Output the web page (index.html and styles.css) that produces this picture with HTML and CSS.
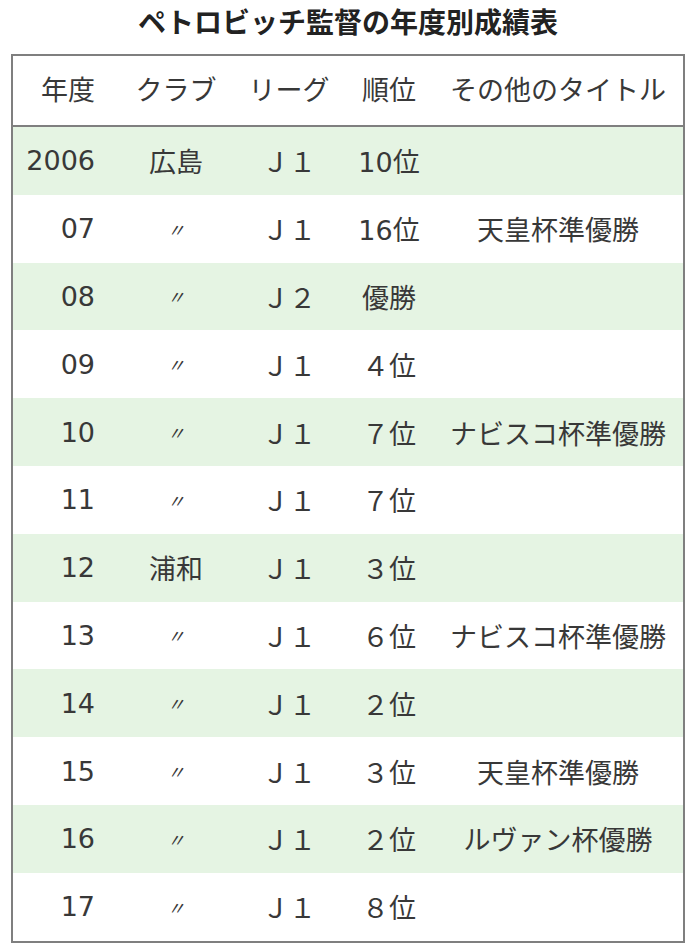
FILE: index.html
```html
<!DOCTYPE html>
<html lang="ja">
<head>
<meta charset="utf-8">
<title>ペトロビッチ監督の年度別成績表</title>
<link rel="stylesheet" href="styles.css">
</head>
<body>
<h1 class="title">ペトロビッチ監督の年度別成績表</h1>
<table class="record">
  <colgroup>
    <col class="c-year"><col class="c-club"><col class="c-league"><col class="c-rank"><col class="c-other">
  </colgroup>
  <thead>
    <tr><th class="year">年度</th><th>クラブ</th><th>リーグ</th><th>順位</th><th>その他のタイトル</th></tr>
  </thead>
  <tbody>
    <tr class="alt"><td class="year">2006</td><td>広島</td><td>Ｊ１</td><td>10位</td><td></td></tr>
    <tr><td class="year">07</td><td class="ditto">〃</td><td>Ｊ１</td><td>16位</td><td>天皇杯準優勝</td></tr>
    <tr class="alt"><td class="year">08</td><td class="ditto">〃</td><td>Ｊ２</td><td>優勝</td><td></td></tr>
    <tr><td class="year">09</td><td class="ditto">〃</td><td>Ｊ１</td><td>４位</td><td></td></tr>
    <tr class="alt"><td class="year">10</td><td class="ditto">〃</td><td>Ｊ１</td><td>７位</td><td>ナビスコ杯準優勝</td></tr>
    <tr><td class="year">11</td><td class="ditto">〃</td><td>Ｊ１</td><td>７位</td><td></td></tr>
    <tr class="alt"><td class="year">12</td><td>浦和</td><td>Ｊ１</td><td>３位</td><td></td></tr>
    <tr><td class="year">13</td><td class="ditto">〃</td><td>Ｊ１</td><td>６位</td><td>ナビスコ杯準優勝</td></tr>
    <tr class="alt"><td class="year">14</td><td class="ditto">〃</td><td>Ｊ１</td><td>２位</td><td></td></tr>
    <tr><td class="year">15</td><td class="ditto">〃</td><td>Ｊ１</td><td>３位</td><td>天皇杯準優勝</td></tr>
    <tr class="alt"><td class="year">16</td><td class="ditto">〃</td><td>Ｊ１</td><td>２位</td><td>ルヴァン杯優勝</td></tr>
    <tr><td class="year">17</td><td class="ditto">〃</td><td>Ｊ１</td><td>８位</td><td></td></tr>
  </tbody>
</table>
</body>
</html>
```
FILE: styles.css
```css
html, body {
  margin: 0;
  padding: 0;
  background: #ffffff;
}
body {
  font-family: "DejaVu Sans", "Noto Sans CJK JP", sans-serif;
  color: #383838;
}
.title {
  margin: 0;
  height: 54px;
  line-height: 42px;
  font-size: 28px;
  font-weight: bold;
  text-align: center;
  color: #222222;
  font-family: "Noto Sans CJK JP", sans-serif;
}
.record {
  margin-left: 11px;
  width: 674px;
  border-collapse: collapse;
  border: 2px solid #7f7f7f;
  table-layout: fixed;
  font-size: 27px;
}
.c-year { width: 107px; }
.c-club { width: 114px; }
.c-league { width: 112px; }
.c-rank { width: 88px; }
.c-other { width: auto; }
.record th, .record td {
  padding: 0;
  text-align: center;
  font-weight: normal;
  white-space: nowrap;
}
.record th {
  height: 65px;
  padding-bottom: 4px;
  border-bottom: 2px solid #7f7f7f;
  font-family: "Noto Sans CJK JP", sans-serif;
  font-size: 27px;
}
.record td {
  height: 67.8px;
}
.record .year {
  text-align: right;
  padding-right: 24px;
}
.record tr.alt td {
  background: #e5f4e3;
}
.record .ditto {
  font-size: 18px;
  font-style: italic;
}
```
